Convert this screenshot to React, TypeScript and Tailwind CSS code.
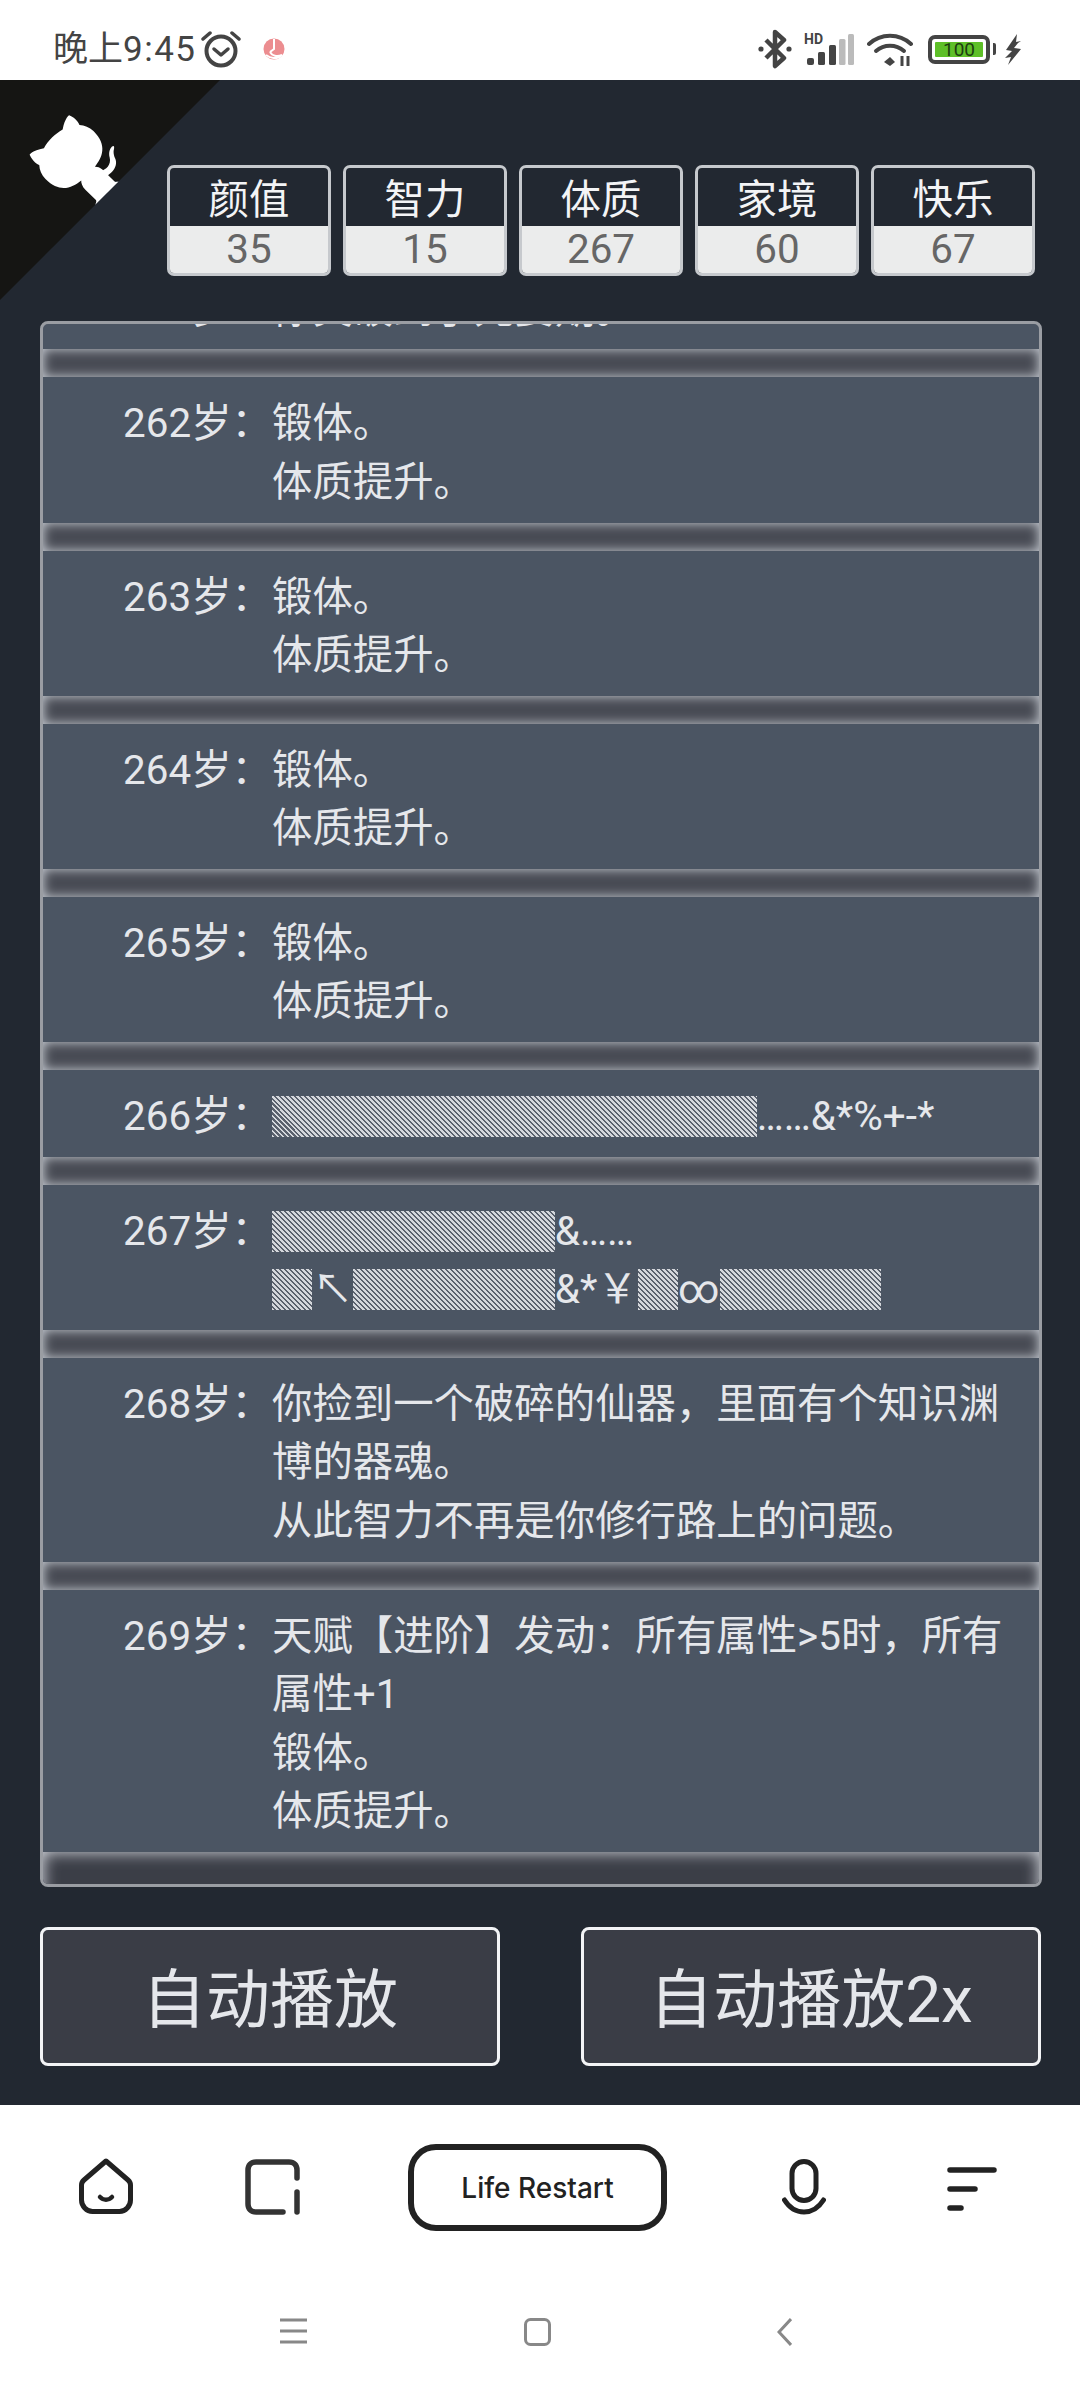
import React from 'react';

const stats = [
  { label: '颜值', value: 35 },
  { label: '智力', value: 15 },
  { label: '体质', value: 267 },
  { label: '家境', value: 60 },
  { label: '快乐', value: 67 },
];

const logs = [
  { age: 262, lines: ['锻体。', '体质提升。'] },
  { age: 263, lines: ['锻体。', '体质提升。'] },
  { age: 264, lines: ['锻体。', '体质提升。'] },
  { age: 265, lines: ['锻体。', '体质提升。'] },
  { age: 266, lines: ['▒▒▒▒▒▒▒▒▒▒▒▒……&*%+-*'] },
  { age: 267, lines: ['▒▒▒▒▒▒▒&……', '▒↖▒▒▒▒▒&*￥▒∞▒▒▒▒'] },
  { age: 268, lines: ['你捡到一个破碎的仙器，里面有个知识渊博的器魂。', '从此智力不再是你修行路上的问题。'] },
  { age: 269, lines: ['天赋【进阶】发动：所有属性>5时，所有属性+1', '锻体。', '体质提升。'] },
];

const Band = () => (
  <div className="h-[28px] shrink-0 bg-[#484b54] shadow-[inset_0_0_12px_#ccd1d8]"></div>
);

// the shade characters are drawn as hatched blocks, the glyph itself stays in the text
const LogLine = ({ text }: { text: string }) => (
  <div>
    {text.split(/(▒+)/).map((part, i) =>
      part.startsWith('▒') ? (
        <span
          key={i}
          className="inline-block h-[41px] bg-[repeating-linear-gradient(45deg,#d4d7dc_0,#d4d7dc_2px,#5a616d_2px,#5a616d_3.5355px)] leading-[41px] text-transparent"
        >
          {part}
        </span>
      ) : (
        <span key={i}>{part}</span>
      )
    )}
  </div>
);

const LogRow = ({ age, lines }: { age: number; lines: string[] }) => (
  <div className="flex shrink-0 pb-[10px] pt-[18px] leading-[58.6px]">
    <div className="w-[229px] shrink-0 text-right">{age}岁：</div>
    <div className="w-[745px]">
      {lines.map((line, i) => (
        <LogLine key={i} text={line} />
      ))}
    </div>
  </div>
);

const CornerCat = () => (
  <svg viewBox="0 0 250 250" className="absolute left-0 top-0 h-[220px] w-[220px] -scale-x-100 text-white" fill="#151513">
    <path d="M0,0 L115,115 L130,115 L142,142 L250,250 L250,0 Z" />
    <path
      d="M128.3,109.0 C113.8,99.7 119.0,89.6 119.0,89.6 C122.0,82.7 120.5,78.6 120.5,78.6 C119.2,72.0 123.4,76.3 123.4,76.3 C127.3,80.9 125.5,87.3 125.5,87.3 C122.9,97.6 130.6,101.9 134.4,103.2"
      fill="currentColor"
    />
    <path
      d="M115.0,115.0 C114.9,115.1 118.7,116.5 119.8,115.4 L133.7,101.6 C136.9,99.2 139.9,98.4 142.2,98.6 C133.8,88.0 127.5,74.4 143.8,58.0 C148.5,53.4 154.0,51.2 159.7,51.0 C160.3,49.4 163.2,43.6 171.4,40.1 C171.4,40.1 176.1,42.5 178.8,56.2 C183.1,58.6 187.2,61.8 190.9,65.4 C194.5,69.0 197.7,73.2 200.1,77.6 C213.8,80.2 216.3,84.9 216.3,84.9 C212.7,93.1 206.9,96.0 205.4,96.6 C205.1,102.4 203.0,107.8 198.3,112.5 C181.9,128.9 168.3,122.5 157.7,114.1 C157.9,116.9 156.7,120.9 152.7,124.9 L141.0,136.5 C139.8,137.7 141.6,141.9 141.8,141.8 Z"
      fill="currentColor"
    />
  </svg>
);

const StatusBar = () => (
  <div className="flex h-[80px] shrink-0 items-center bg-white pt-[18px] text-[#444]">
    <span className="ml-[53px] w-[142px] whitespace-nowrap text-[35px] leading-none">
      晚上<span className="tracking-[1.5px]">9:45</span>
    </span>
    <svg viewBox="0 0 40 38" className="ml-[6px] h-[38px] w-[40px]" fill="none" stroke="#444">
      <circle cx="20" cy="21" r="14.5" strokeWidth="4" />
      <path d="M13 19l7 6 7-6" strokeWidth="3.5" strokeLinecap="round" strokeLinejoin="round" />
      <path d="M2 9l7-6M38 9l-7-6" strokeWidth="3.5" strokeLinecap="round" />
    </svg>
    <svg viewBox="0 0 22 22" className="ml-[22px] h-[22px] w-[22px]">
      <circle cx="11" cy="11" r="10.5" fill="#ec8d90" />
      <path d="M11 1v10l-4 3M3 17c4 3 11 5 16 0-5 2-10 1-12-3" fill="none" stroke="#fff" strokeWidth="2" />
    </svg>
    <div className="flex-1"></div>
    <svg viewBox="0 0 34 40" className="h-[40px] w-[34px]" fill="none" stroke="#444" strokeWidth="4.5">
      <path d="M8 11l18 18-9 8V3l9 8L8 29" strokeLinejoin="round" />
      <circle cx="3" cy="20" r="2.6" fill="#444" stroke="none" />
      <circle cx="31" cy="20" r="2.6" fill="#444" stroke="none" />
    </svg>
    <svg viewBox="0 0 50 32" className="ml-[12px] h-[32px] w-[50px]">
      <text x="0" y="11" fontSize="14" fontWeight="700" fontFamily="Roboto, sans-serif" fill="#444">HD</text>
      <rect x="3" y="25" width="7" height="7" rx="2" fill="#444" />
      <rect x="14" y="19" width="7" height="13" rx="1.5" fill="#444" />
      <rect x="25" y="12" width="7" height="20" rx="1.5" fill="#444" />
      <rect x="35" y="6" width="6.5" height="26" rx="1.5" fill="#bbb" />
      <rect x="44" y="1" width="6" height="31" rx="1.5" fill="#bbb" />
    </svg>
    <svg viewBox="0 0 46 35" className="ml-[13px] h-[35px] w-[46px]" fill="none" stroke="#444" strokeWidth="4" strokeLinecap="round">
      <path d="M2 12C14 1 32 1 44 12" />
      <path d="M9 19c8-7 20-7 28 0" />
      <path d="M17 30l6-5 5 5-5 4z" fill="#444" stroke="none" />
      <path d="M35 24v10M41 24v10" strokeWidth="3" strokeLinecap="butt" />
    </svg>
    <div className="ml-[15px] flex h-[29px] w-[62px] rounded-[7px] border-[4px] border-[#444] p-[3px]">
      <div className="flex flex-1 items-center justify-center rounded-[1px] bg-[#5ebf28] text-[19px] leading-none text-[#1c3d10]">100</div>
    </div>
    <div className="ml-[3px] h-[12px] w-[3px] rounded-r-[2px] bg-[#444]"></div>
    <svg viewBox="0 0 17 31" className="ml-[9px] mr-[58px] h-[31px] w-[17px]" fill="#444">
      <path d="M12 0L1 16l6 1-5 5 0 0-2 2 6-1-3 8 13-16-7-1 4-5 3-2-5 1z" />
    </svg>
  </div>
);

const BottomNav = () => (
  <div className="flex h-[126px] shrink-0 items-start text-[#222]">
    <svg viewBox="0 0 54 56" className="ml-[79px] mt-[53px] h-[56px] w-[54px]" fill="none" stroke="#222" strokeWidth="5" strokeLinejoin="round">
      <path d="M27 3L49 22c1.500 1.300 2.500 3 2.500 5v15c0 6-5 11.500-11 11.500h-27c-6 0-11-5.500-11-11.500V27c0-2 1-3.700 2.500-5z" />
      <path d="M21 39c3.500 3.500 8.500 3.500 12 0" strokeWidth="4.500" strokeLinecap="round" />
    </svg>
    <svg viewBox="0 0 55 56" className="ml-[112px] mt-[54px] h-[56px] w-[55px]" fill="none" stroke="#333" strokeWidth="5.500" strokeLinecap="round">
      <path d="M52 19V11c0-5-3-8-8-8H11C6 3 3 6 3 11v34c0 5 3 8 8 8h27" />
      <path d="M52 33v20" />
    </svg>
    <div className="ml-[108px] mt-[39px] flex h-[87px] w-[259px] items-center justify-center rounded-[28px] border-[6px] border-[#222] pt-[1px] font-['Inter',sans-serif] text-[28px] font-medium">
      Life Restart
    </div>
    <svg viewBox="0 0 44 56" className="ml-[115px] mt-[54px] h-[56px] w-[44px]" fill="none" stroke="#222" strokeWidth="5" strokeLinecap="round">
      <rect x="10" y="2.500" width="24" height="39" rx="12" />
      <path d="M2.500 41c5 8 12 12 19.500 12s14.500-4 19.500-12" />
    </svg>
    <svg viewBox="0 0 50 44" className="ml-[121px] mt-[62px] h-[44px] w-[50px]" fill="none" stroke="#222" strokeWidth="5.500" strokeLinecap="round">
      <path d="M3 3h44M3 22h25M3 41h11" />
    </svg>
  </div>
);

const SystemNav = () => (
  <div className="flex flex-1 items-start">
    <svg viewBox="0 0 27 26" className="ml-[280px] mt-[87px] h-[26px] w-[27px]" stroke="#888" strokeWidth="3">
      <path d="M0 2h27M0 13h27M0 24h27" />
    </svg>
    <svg viewBox="0 0 27 28" className="ml-[217px] mt-[87px] h-[28px] w-[27px]" fill="none" stroke="#888" strokeWidth="3">
      <rect x="1.500" y="1.500" width="24" height="25" rx="5" />
    </svg>
    <svg viewBox="0 0 15 28" className="ml-[226px] mt-[87px] h-[28px] w-[15px]" fill="none" stroke="#888" strokeWidth="3">
      <path d="M14 1L2 14l12 13" />
    </svg>
  </div>
);

export default function App() {
  return (
    <div className="flex h-[2400px] w-[1080px] flex-col overflow-hidden bg-white font-['Roboto','Noto_Sans_CJK_SC',sans-serif]">
      <StatusBar />

      <div className="relative flex h-[2025px] shrink-0 flex-col bg-[#222831]">
        <CornerCat />

        {/* stats */}
        <div className="ml-[167px] mt-[85px] flex gap-[12px]">
          {stats.map((s) => (
            <div key={s.label} className="h-[111px] w-[164px] rounded-[7px] border-[3px] border-[#c6c9cd] text-center text-[40.4px]">
              <div className="h-[58px] pt-[8px] leading-[50px] text-[#f3f4f6]">{s.label}</div>
              <div className="h-[47px] rounded-b-[4px] bg-[#ebecec] pt-[1px] leading-[46px] text-[#666]">{s.value}</div>
            </div>
          ))}
        </div>

        {/* life log */}
        <div className="ml-[40px] mt-[45px] flex h-[1566px] w-[1002px] flex-col justify-end overflow-hidden rounded-[8px] border-[3px] border-[#9a9da3] bg-[#4b5563] text-[40.4px] text-[#e5e7eb]">
          <LogRow age={261} lines={['你突破到了元婴期。']} />
          {logs.map((log) => (
            <React.Fragment key={log.age}>
              <Band />
              <LogRow age={log.age} lines={log.lines} />
            </React.Fragment>
          ))}
          <div className="-mb-[20px] h-[52px] shrink-0 bg-[#3b3e47] shadow-[inset_0_0_16px_#d9dce3]"></div>
        </div>

        {/* buttons */}
        <div className="ml-[40px] mt-[40px] flex w-[1001px] justify-between">
          <button className="h-[139px] w-[460px] rounded-[8px] border-[3px] border-[#f3f4f6] bg-[#3a3d46] pt-[8px] text-[64px] text-[#e5e7eb]">自动播放</button>
          <button className="h-[139px] w-[460px] rounded-[8px] border-[3px] border-[#f3f4f6] bg-[#3a3d46] pt-[8px] text-[64px] text-[#e5e7eb]">自动播放2x</button>
        </div>
      </div>

      <BottomNav />
      <SystemNav />
    </div>
  );
}
